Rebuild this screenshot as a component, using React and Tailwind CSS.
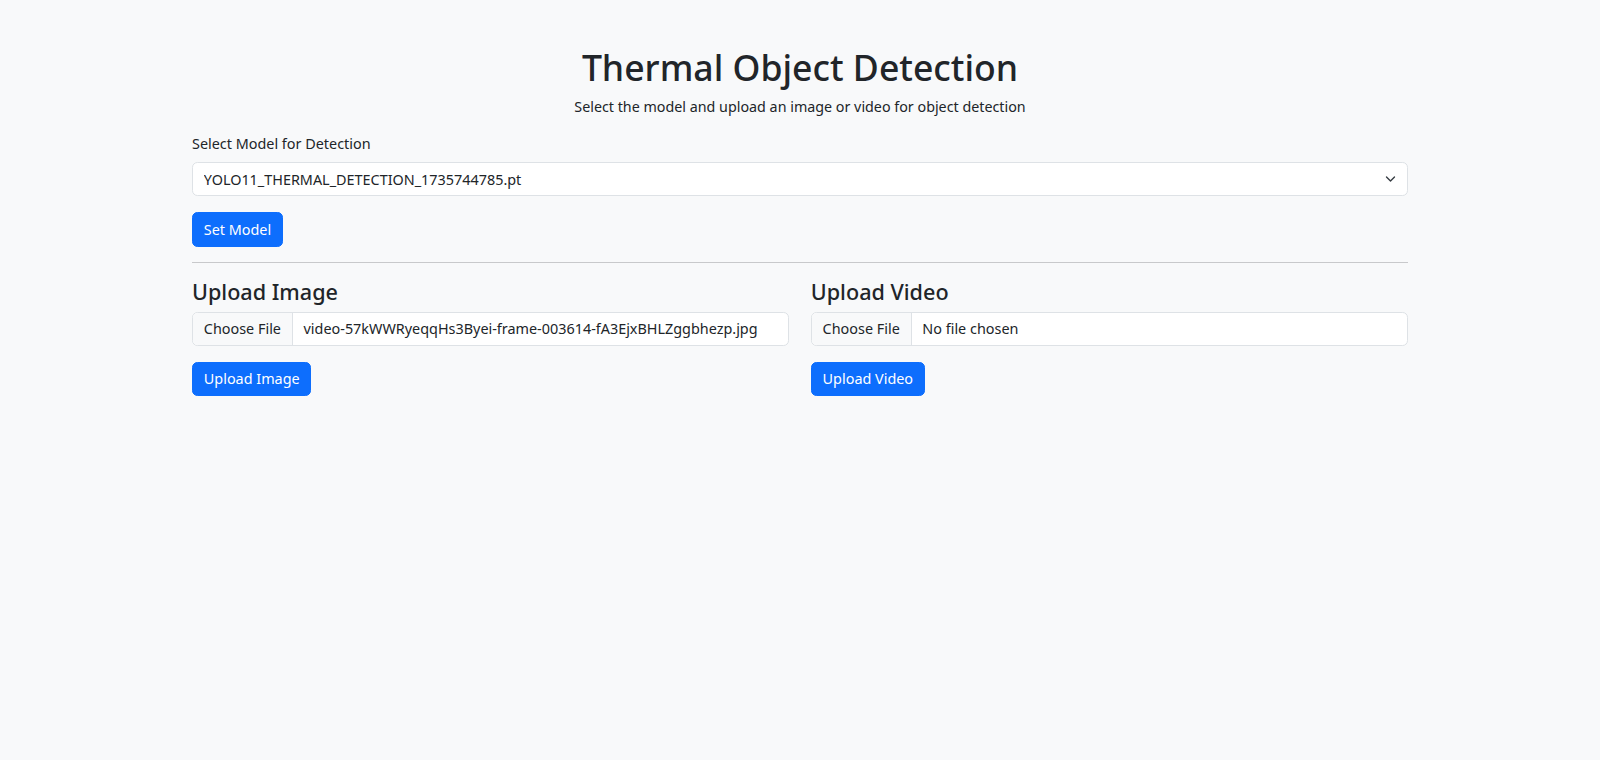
import React, { useState } from 'react';

const MODELS = [
    'YOLO11_THERMAL_DETECTION_1735744785.pt',
];

const FileField = ({ fileName }) => (
    <div className="flex items-center h-[34.2px] bg-white border border-[#dee2e6] rounded-[5.4px] overflow-hidden text-[14.4px] leading-[21.6px] text-[#212529]">
        <span className="h-full flex items-center px-[10.8px] bg-[#f8f9fa] border-r border-[#dee2e6] whitespace-nowrap">Choose File</span>
        <span className="pl-[10.8px] whitespace-nowrap overflow-hidden">{fileName || 'No file chosen'}</span>
    </div>
);

const PrimaryButton = ({ children }) => (
    <button className="h-[34.2px] px-[10.8px] bg-[#0d6efd] border border-[#0d6efd] rounded-[5.4px] text-white text-[14.4px] leading-[21.6px] hover:bg-[#0b5ed7]">
        {children}
    </button>
);

const App = () => {
    const [model, setModel] = useState(MODELS[0]);

    return (
        <div className="min-h-screen bg-[#f8f9fa] text-[#212529] font-['Noto_Sans',sans-serif]">
            <div className="w-[1216px] mx-auto pt-[45.5px]">

                {/* Header */}
                <div className="text-center">
                    <h1 className="text-[35.6px] leading-[43.2px] font-medium mb-[7.2px]">Thermal Object Detection</h1>
                    <p className="text-[14.3px] leading-[21.6px] mb-[16px]">Select the model and upload an image or video for object detection</p>
                </div>

                {/* Model select */}
                <div className="mb-[16px]">
                    <label className="block text-[14.4px] leading-[21.6px] mb-[7.2px]">Select Model for Detection</label>
                    <div className="relative">
                        <select
                            value={model}
                            onChange={e => setModel(e.target.value)}
                            className="appearance-none w-full h-[34.2px] pl-[10.8px] pr-[36px] bg-white border border-[#dee2e6] rounded-[5.4px] text-[14.4px] leading-[21.6px] text-[#212529] outline-none"
                        >
                            {MODELS.map(m => <option key={m}>{m}</option>)}
                        </select>
                        <svg className="absolute right-[12px] top-1/2 -translate-y-1/2 pointer-events-none" width="11" height="8" viewBox="0 0 16 12" fill="none">
                            <path d="m2 3 6 6 6-6" stroke="#343a40" strokeWidth="2" strokeLinecap="round" strokeLinejoin="round" />
                        </svg>
                    </div>
                </div>
                <PrimaryButton>Set Model</PrimaryButton>

                <hr className="mt-[15px] mb-[16px] border-0 border-t border-[#c8c9cb]" />

                {/* Upload sections */}
                <div className="grid grid-cols-2 gap-x-[21.6px]">
                    <div>
                        <h4 className="text-[21.6px] leading-[25.9px] font-medium mb-[7.2px]">Upload Image</h4>
                        <div className="mb-[15.6px]">
                            <FileField fileName="video-57kWWRyeqqHs3Byei-frame-003614-fA3EjxBHLZggbhezp.jpg" />
                        </div>
                        <PrimaryButton>Upload Image</PrimaryButton>
                    </div>
                    <div>
                        <h4 className="text-[21.6px] leading-[25.9px] font-medium mb-[7.2px]">Upload Video</h4>
                        <div className="mb-[15.6px]">
                            <FileField />
                        </div>
                        <PrimaryButton>Upload Video</PrimaryButton>
                    </div>
                </div>
            </div>
        </div>
    );
};

export default App;
